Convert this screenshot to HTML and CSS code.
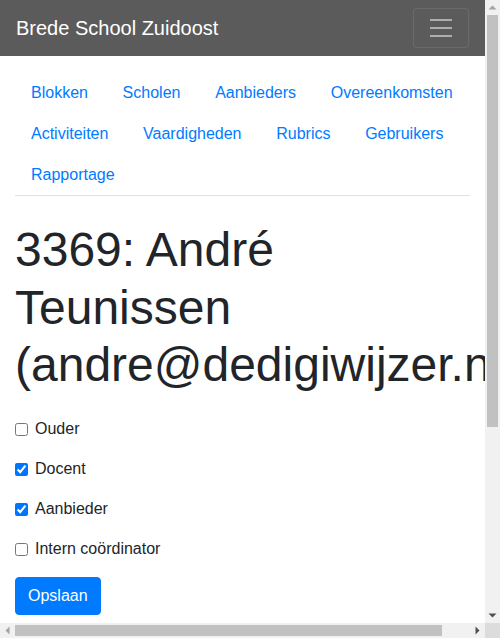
FILE: index.html
```html
<!DOCTYPE html>
<html lang="nl">
<head>
<meta charset="utf-8">
<title>Brede School Zuidoost</title>
<link rel="stylesheet" href="styles.css">
</head>
<body>
<div class="viewport">
<header class="navbar">
  <a class="brand" href="#">Brede School Zuidoost</a>
  <button class="toggler" type="button" aria-label="Menu">
    <svg class="toggler-icon" viewBox="0 0 30 30" width="30" height="30"><path d="M4 7h22M4 15h22M4 23h22" stroke="rgba(255,255,255,0.5)" stroke-width="2" stroke-linecap="butt" fill="none"/></svg>
  </button>
</header>
<main class="container">
  <nav class="subnav">
    <a class="nav-link" href="#">Blokken</a>
    <a class="nav-link" href="#">Scholen</a>
    <a class="nav-link" href="#">Aanbieders</a>
    <a class="nav-link" href="#">Overeenkomsten</a>
    <a class="nav-link" href="#">Activiteiten</a>
    <a class="nav-link" href="#">Vaardigheden</a>
    <a class="nav-link" href="#">Rubrics</a>
    <a class="nav-link" href="#">Gebruikers</a>
    <a class="nav-link" href="#">Rapportage</a>
  </nav>
  <h1 class="title">3369: André Teunissen (andre@dedigiwijzer.nl)</h1>
  <form class="roles">
    <label class="form-check"><input type="checkbox" class="check"> <span>Ouder</span></label>
    <label class="form-check"><input type="checkbox" class="check" checked> <span>Docent</span></label>
    <label class="form-check"><input type="checkbox" class="check" checked> <span>Aanbieder</span></label>
    <label class="form-check"><input type="checkbox" class="check"> <span>Intern coördinator</span></label>
    <button type="submit" class="btn">Opslaan</button>
  </form>
</main>
</div>

<div class="vscroll" aria-hidden="true">
  <div class="sb-btn"><svg viewBox="0 0 15 15" width="15" height="15"><polygon points="3.5,9.5 7.5,5.5 11.5,9.5" fill="#a3a3a3"/></svg></div>
  <div class="vtrack"><div class="vthumb"></div></div>
  <div class="sb-btn"><svg viewBox="0 0 15 15" width="15" height="15"><polygon points="3.5,5.5 11.5,5.5 7.5,9.5" fill="#505050"/></svg></div>
</div>
<div class="hscroll" aria-hidden="true">
  <div class="sb-btn"><svg viewBox="0 0 15 15" width="15" height="15"><polygon points="5.5,7.5 9.5,3.5 9.5,11.5" fill="#a3a3a3"/></svg></div>
  <div class="htrack"><div class="hthumb"></div></div>
  <div class="sb-btn"><svg viewBox="0 0 15 15" width="15" height="15"><polygon points="5.5,3.5 9.5,7.5 5.5,11.5" fill="#505050"/></svg></div>
</div>
<div class="sb-corner" aria-hidden="true"></div>
</body>
</html>
```

FILE: styles.css
```css
html, body {
  margin: 0;
  padding: 0;
  overflow: hidden;
}
body {
  font-family: "Liberation Sans", Arial, sans-serif;
  font-size: 16px;
  line-height: 1.5;
  color: #212529;
  background: #fff;
}
.viewport {
  width: 485px;
  height: 623px;
  overflow: hidden;
}

/* simulated classic scrollbars (overlay) */
.vscroll {
  position: fixed;
  top: 0;
  right: 0;
  width: 15px;
  height: 623px;
  display: flex;
  flex-direction: column;
  background: #f1f1f1;
}
.hscroll {
  position: fixed;
  left: 0;
  bottom: 0;
  width: 485px;
  height: 15px;
  display: flex;
  background: #f1f1f1;
}
.sb-corner {
  position: fixed;
  right: 0;
  bottom: 0;
  width: 15px;
  height: 15px;
  background: #dcdcdc;
}
.sb-btn {
  width: 15px;
  height: 15px;
  flex: none;
}
.sb-btn svg {
  display: block;
}
.vtrack {
  flex: 1;
  padding: 0 2px;
}
.vthumb {
  height: 412px;
  background: #c1c1c1;
}
.htrack {
  flex: 1;
  padding: 2px 0;
}
.hthumb {
  width: 427px;
  height: 11px;
  background: #c1c1c1;
}

.navbar {
  display: flex;
  align-items: center;
  justify-content: space-between;
  background: #5b5b5b;
  padding: 8px 16px;
  height: 40px;
}
.brand {
  font-size: 20px;
  line-height: 30px;
  padding: 5px 0;
  color: #fff;
  text-decoration: none;
}
.toggler {
  display: flex;
  align-items: center;
  justify-content: center;
  box-sizing: border-box;
  width: 56px;
  height: 40px;
  padding: 4px 12px;
  background: transparent;
  border: 1px solid rgba(255,255,255,0.1);
  border-radius: 4px;
}
.toggler-icon {
  display: block;
  width: 30px;
  height: 30px;
}
.container {
  padding: 0 15px;
}
.subnav {
  display: flex;
  flex-wrap: wrap;
  column-gap: 2.7px;
  row-gap: 1px;
  margin-top: 16.5px;
  padding-bottom: 0.5px;
  border-bottom: 1px solid #dee2e6;
}
.nav-link {
  display: block;
  padding: 8px 16px;
  color: #007bff;
  text-decoration: none;
  line-height: 24px;
}
.title {
  font-size: 48px;
  font-weight: 400;
  line-height: 1.2;
  margin: 25px 0 23px;
}
.roles {
  display: flex;
  flex-direction: column;
  align-items: flex-start;
}
.form-check {
  display: flex;
  align-items: flex-start;
  line-height: 24px;
  margin-bottom: 16px;
}
.check {
  width: 13px;
  height: 13px;
  margin: 6px 7px 0 0;
}
.btn {
  font-family: "Liberation Sans", Arial, sans-serif;
  font-size: 16px;
  line-height: 24px;
  padding: 6px 12px;
  color: #fff;
  background: #007bff;
  border: 1px solid #007bff;
  border-radius: 4px;
}
```
